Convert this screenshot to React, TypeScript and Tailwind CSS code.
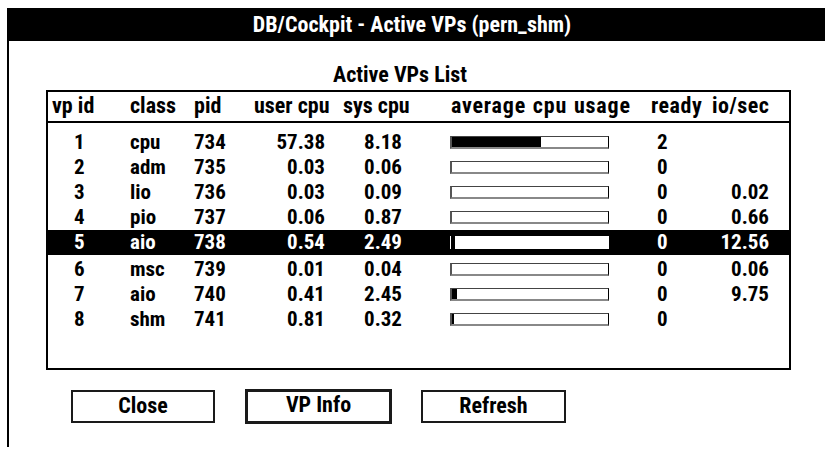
import React from "react";

type Row = {
  id: string;
  cls: string;
  pid: string;
  user: string;
  sys: string;
  fill: number;
  ready: string;
  io: string;
  sel?: boolean;
};

const rows: Row[] = [
  { id: "1", cls: "cpu", pid: "734", user: "57.38", sys: "8.18", fill: 89, ready: "2", io: "" },
  { id: "2", cls: "adm", pid: "735", user: "0.03", sys: "0.06", fill: 0, ready: "0", io: "" },
  { id: "3", cls: "lio", pid: "736", user: "0.03", sys: "0.09", fill: 0, ready: "0", io: "0.02" },
  { id: "4", cls: "pio", pid: "737", user: "0.06", sys: "0.87", fill: 0, ready: "0", io: "0.66" },
  { id: "5", cls: "aio", pid: "738", user: "0.54", sys: "2.49", fill: 4, ready: "0", io: "12.56", sel: true },
  { id: "6", cls: "msc", pid: "739", user: "0.01", sys: "0.04", fill: 0, ready: "0", io: "0.06" },
  { id: "7", cls: "aio", pid: "740", user: "0.41", sys: "2.45", fill: 5, ready: "0", io: "9.75" },
  { id: "8", cls: "shm", pid: "741", user: "0.81", sys: "0.32", fill: 2, ready: "0", io: "" },
];

const font = {
  fontFamily: 'Roboto, "Liberation Sans", sans-serif',
};

const grid = "grid grid-cols-[78px_64px_60px_80px_88px_230px_60px_81px]";

function Bar({ fill, sel }: { fill: number; sel?: boolean }) {
  return (
    <div
      className={
        sel
          ? "w-[159px] h-[13px] bg-white border-l border-white flex"
          : "w-[159px] h-[13px] bg-white border-t border-t-[#444] border-r border-black border-l-2 border-l-[#555] border-b-2 border-b-[#888] flex"
      }
    >
      <div className="h-full bg-black" style={{ width: fill }} />
    </div>
  );
}

export default function App() {
  return (
    <div
      className="w-[825px] h-[449px] bg-white overflow-hidden pt-[8px] pl-[7px] font-bold font-stretch-condensed text-black"
      style={font}
    >
      <div className="h-[33px] bg-black text-white text-[22px] leading-[33px] text-center pr-[8px]">
        DB/Cockpit - Active VPs (pern_shm)
      </div>
      <div className="border-l-2 border-black h-[406px]">
        <div className="h-[49px] flex items-end justify-center pr-[34px] pb-[4px] text-[22px] leading-none">
          Active VPs List
        </div>
        <div className="ml-[37px] w-[745px] h-[280px] border-2 border-black text-[21px] leading-none">
          <div className={`${grid} h-[31px] border-b-2 border-black items-center pb-[1px] text-[22px]`}>
            <div className="pl-[4px]">vp id</div>
            <div className="pl-[4px]">class</div>
            <div className="pl-[4px]">pid</div>
            <div className="pl-[4px]">user cpu</div>
            <div className="pl-[13px]">sys cpu</div>
            <div className="pl-[33px] tracking-[0.8px] [word-spacing:1px]">average cpu usage</div>
            <div className="pl-[3px] tracking-[0.5px]">ready</div>
            <div className="pl-[4px] tracking-[0.5px]">io/sec</div>
          </div>
          <div className="pt-[7px]">
            {rows.map((r) => (
              <div
                key={r.id}
                className={`${grid} h-[25px] items-center ${r.sel ? "bg-black text-white mb-[2px]" : ""}`}
              >
                <div className="pl-[26px]">{r.id}</div>
                <div className="pl-[4px]">{r.cls}</div>
                <div className="pl-[4px]">{r.pid}</div>
                <div className="text-right pr-[5px]">{r.user}</div>
                <div className="text-right pr-[16px]">{r.sys}</div>
                <div className="pl-[32px]">
                  <Bar fill={r.fill} sel={r.sel} />
                </div>
                <div className="pl-[9px]">{r.ready}</div>
                <div className="text-right pr-[20px]">{r.io}</div>
              </div>
            ))}
          </div>
        </div>
        <div className="flex items-center mt-[19px] ml-[62px] text-[22px] leading-none">
          <div className="w-[144px] h-[33px] border-2 border-[#1a1a1a] flex items-center justify-center pb-[2px]">
            Close
          </div>
          <div className="ml-[30px] w-[147px] h-[35px] border-[3px] border-[#1a1a1a] flex items-center justify-center pb-[3px]">
            VP Info
          </div>
          <div className="ml-[29px] w-[145px] h-[33px] border-2 border-[#1a1a1a] flex items-center justify-center pb-[2px]">
            Refresh
          </div>
        </div>
      </div>
    </div>
  );
}
